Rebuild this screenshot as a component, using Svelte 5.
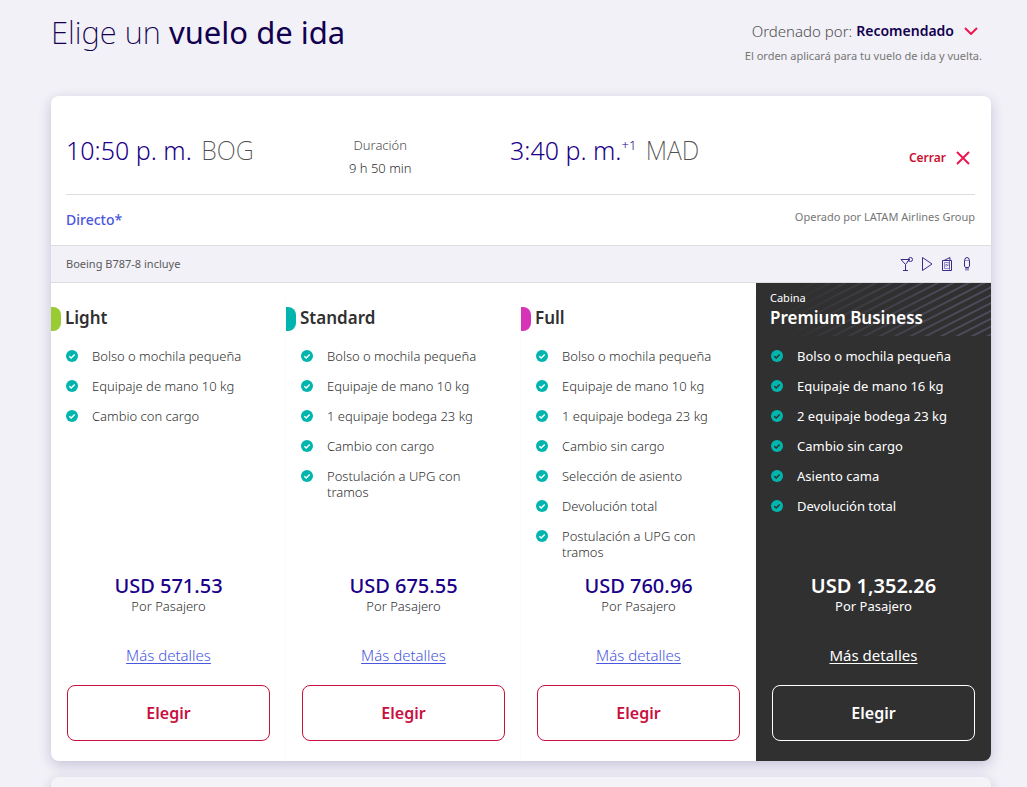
<script>
  let sortBy = $state('recomendado');

  const fares = [
    {
      name: 'Light',
      tone: 'light',
      features: ['Bolso o mochila pequeña', 'Equipaje de mano 10 kg', 'Cambio con cargo'],
      price: '571.53',
    },
    {
      name: 'Standard',
      tone: 'standard',
      features: [
        'Bolso o mochila pequeña',
        'Equipaje de mano 10 kg',
        '1 equipaje bodega 23 kg',
        'Cambio con cargo',
        'Postulación a UPG con tramos',
      ],
      price: '675.55',
    },
    {
      name: 'Full',
      tone: 'full',
      features: [
        'Bolso o mochila pequeña',
        'Equipaje de mano 10 kg',
        '1 equipaje bodega 23 kg',
        'Cambio sin cargo',
        'Selección de asiento',
        'Devolución total',
        'Postulación a UPG con tramos',
      ],
      price: '760.96',
    },
    {
      name: 'Premium Business',
      tone: 'premium',
      cabin: 'Cabina',
      features: [
        'Bolso o mochila pequeña',
        'Equipaje de mano 16 kg',
        '2 equipaje bodega 23 kg',
        'Cambio sin cargo',
        'Asiento cama',
        'Devolución total',
      ],
      price: '1,352.26',
    },
  ];
</script>

<main>
  <header class="top">
    <h1>Elige un <strong>vuelo de ida</strong></h1>
    <div class="sort">
      <div class="sort-line">
        <label for="sort">Ordenado por:</label>
        <select id="sort" bind:value={sortBy}>
          <option value="recomendado">Recomendado</option>
          <option value="precio">Precio</option>
          <option value="duracion">Duración</option>
        </select>
        <svg class="chevron" viewBox="0 0 14 8" aria-hidden="true">
          <path d="M1 1l6 6 6-6" />
        </svg>
      </div>
      <p>El orden aplicará para tu vuelo de ida y vuelta.</p>
    </div>
  </header>

  <article class="flight">
    <div class="summary">
      <div class="times">
        <p class="time">10:50 p. m. <span class="city">BOG</span></p>
        <p class="duration"><span>Duración</span>9 h 50 min</p>
        <p class="time">3:40 p. m.<sup>+1</sup> <span class="city">MAD</span></p>
        <button type="button" class="close">
          Cerrar
          <svg viewBox="0 0 14 14" aria-hidden="true"><path d="M1 1l12 12M13 1L1 13" /></svg>
        </button>
      </div>
      <div class="operator">
        <a href="#directo">Directo*</a>
        <span>Operado por LATAM Airlines Group</span>
      </div>
    </div>

    <div class="amenities">
      <span>Boeing B787-8 incluye</span>
      <div class="icons">
        <svg viewBox="0 0 14 16" aria-hidden="true">
          <path d="M1 3.500h8.500L5.500 8.500zM5.500 8.500v6M3 14.500h5M7 6l3-3" />
          <circle cx="10.500" cy="3.500" r="2" />
        </svg>
        <svg viewBox="0 0 14 16" aria-hidden="true">
          <path d="M2.500 1.500v13L12 8z" />
        </svg>
        <svg viewBox="0 0 14 16" aria-hidden="true">
          <path d="M2.500 4.500h9v10h-9zM4 4.500l6-3v3" />
          <path class="fine" d="M4.500 6.500h5v6h-5zM6 11V8l2 2V7.500M9.500 5v9" />
        </svg>
        <svg viewBox="0 0 14 16" aria-hidden="true">
          <path d="M4.500 4.500l1-2.500 1.500-.5 1.500.5 1 2.500v5.500l-1 1.500h-3l-1-1.500zM6 11.500v3M8 11.500v3" />
          <path class="fine" d="M4.500 4.500h5" />
        </svg>
      </div>
    </div>

    <div class="fares">
      {#each fares as fare}
        <section class="fare {fare.tone}">
          <div class="fare-head">
            {#if fare.cabin}
              <span class="cabin">{fare.cabin}</span>
            {/if}
            <h2>{fare.name}</h2>
          </div>
          <ul>
            {#each fare.features as feature}
              <li>
                <svg viewBox="0 0 12 12" aria-hidden="true">
                  <circle cx="6" cy="6" r="6" />
                  <path d="M3.300 6.200l1.900 1.800 3.500-3.600" />
                </svg>
                {feature}
              </li>
            {/each}
          </ul>
          <div class="buy">
            <strong class="price">USD {fare.price}</strong>
            <span class="per">Por Pasajero</span>
            <a href="#detalles">Más detalles</a>
            <button type="button">Elegir</button>
          </div>
        </section>
      {/each}
    </div>
  </article>

  <article class="flight next"></article>
</main>

<style>
  :global(html) {
    overflow: hidden;
  }

  :global(body) {
    margin: 0;
    background: #f2f1f7;
  }

  main {
    padding: 0 36px 0 51px;
    font-family: 'Noto Sans', 'Open Sans', sans-serif;
    font-size: 13px;
    font-weight: 300;
    line-height: 16px;
    color: #303030;
  }

  h1,
  h2,
  p,
  ul {
    margin: 0;
    padding: 0;
  }

  button {
    font-family: inherit;
    cursor: pointer;
  }

  .top {
    display: flex;
    justify-content: space-between;
    height: 84px;
    padding-top: 12px;
  }

  h1 {
    font-size: 31px;
    font-weight: 200;
    line-height: 40px;
    color: #10004f;
  }

  h1 strong {
    font-weight: 400;
  }

  .sort {
    padding: 8px 9px 0 0;
    color: #505050;
  }

  .sort-line {
    display: flex;
    align-items: center;
    justify-content: flex-end;
    padding-right: 4px;
    font-size: 15px;
    line-height: 22px;
  }

  select {
    field-sizing: content;
    margin: 0 10px 0 4px;
    padding: 0;
    border: 0;
    appearance: none;
    background: none;
    font: inherit;
    font-size: 14px;
    font-weight: 600;
    color: #10004f;
  }

  .chevron {
    width: 14px;
    height: 8px;
    fill: none;
    stroke: #ed1650;
    stroke-width: 2;
  }

  .sort p {
    margin-top: 6px;
    font-size: 11px;
    font-weight: 400;
    text-align: right;
    color: #767676;
  }

  .flight {
    border-radius: 8px;
    background: #fff;
    box-shadow: 0 4px 14px rgba(27, 0, 100, 0.2);
  }

  .summary {
    padding: 0 16px 0 15px;
  }

  .times {
    display: grid;
    grid-template-columns: 242fr 202fr 321fr 144fr;
    height: 98px;
    border-bottom: 1px solid #dedede;
  }

  .time {
    padding-top: 38px;
    font-size: 25px;
    line-height: 32px;
    white-space: nowrap;
    color: #1b0088;
  }

  .time .city {
    margin-left: 3px;
    font-weight: 200;
    color: #505050;
  }

  .time sup {
    font-size: 13px;
    line-height: 12px;
    vertical-align: 10px;
  }

  .duration {
    justify-self: start;
    padding: 38px 0 0 41px;
    line-height: 23px;
    text-align: center;
  }

  .duration span {
    display: block;
    color: #505050;
  }

  .close {
    display: flex;
    align-items: center;
    align-self: start;
    justify-self: end;
    gap: 10px;
    margin-top: 52px;
    padding: 0 5px 0 0;
    border: 0;
    background: none;
    font-size: 12px;
    font-weight: 600;
    line-height: 20px;
    color: #c8102e;
  }

  .close svg {
    width: 14px;
    height: 14px;
    stroke: #ed1650;
    stroke-width: 2;
  }

  .operator {
    display: flex;
    justify-content: space-between;
    height: 36px;
    padding-top: 14px;
    font-size: 11px;
    font-weight: 400;
    color: #767676;
  }

  .operator a {
    font-size: 14px;
    font-weight: 500;
    line-height: 22px;
    text-decoration: none;
    color: #4956de;
  }

  .amenities {
    display: flex;
    align-items: center;
    justify-content: space-between;
    height: 36px;
    padding: 0 17px 0 15px;
    border: solid #dedede;
    border-width: 1px 0;
    background: #f2f1f7;
    font-size: 11px;
    font-weight: 400;
    color: #5a5a5a;
  }

  .icons {
    display: flex;
    gap: 6px;
  }

  .icons svg {
    width: 14px;
    height: 16px;
    fill: none;
    stroke: #3b2a8a;
    stroke-width: 1;
  }

  .icons .fine {
    stroke-opacity: 0.5;
  }

  .fares {
    display: grid;
    grid-template-columns: repeat(4, 1fr);
    overflow: hidden;
    border-radius: 0 0 8px 8px;
  }

  .fare {
    display: flex;
    flex-direction: column;
    box-shadow: -3px 8px 4px -4px rgba(48, 48, 48, 0.06);
  }

  .fare-head {
    position: relative;
    display: flex;
    flex-direction: column;
    justify-content: flex-end;
    height: 47px;
    padding: 0 14px 6px;
  }

  .fare-head::before {
    content: '';
    position: absolute;
    left: 0;
    bottom: 5px;
    width: 10px;
    height: 24px;
    border-radius: 0 8px 8px 0;
    background: var(--tag);
  }

  .light {
    --tag: #9c3;
  }

  .standard {
    --tag: #00b5ad;
  }

  .full {
    --tag: #d633b9;
  }

  h2 {
    position: relative;
    font-size: 17px;
    font-weight: 600;
    line-height: 24px;
  }

  .cabin {
    position: relative;
    font-size: 11px;
    font-weight: 400;
    line-height: 16px;
  }

  ul {
    display: flex;
    flex-direction: column;
    gap: 14px;
    min-height: 214px;
    padding: 12px 32px 0 15px;
    list-style: none;
  }

  li {
    display: flex;
    gap: 14px;
  }

  li svg {
    flex: none;
    width: 12px;
    height: 12px;
    margin-top: 2px;
    fill: #00b5ad;
  }

  li path {
    fill: none;
    stroke: #fff;
    stroke-width: 1.500;
  }

  .buy {
    display: flex;
    flex-direction: column;
    align-items: center;
    padding: 12px 16px 20px;
  }

  .price {
    font-size: 20px;
    font-weight: 500;
    line-height: 24px;
    color: #1b0088;
  }

  .buy a {
    margin-top: 30px;
    font-size: 15px;
    line-height: 22px;
    text-underline-offset: 2px;
    color: #4956de;
  }

  .buy button {
    width: 100%;
    height: 56px;
    margin-top: 19px;
    border: 1px solid #c8103e;
    border-radius: 8px;
    background: none;
    font-size: 16px;
    font-weight: 600;
    color: #c8103e;
  }

  .premium {
    background: #303030;
    font-weight: 400;
    color: #fff;
  }

  .premium .fare-head::before {
    inset: 0;
    width: auto;
    height: auto;
    border-radius: 0;
    background: repeating-linear-gradient(153deg, transparent 0 4px, #4d4b5a 5px 6px, transparent 7px);
    mask-image: linear-gradient(90deg, transparent 10%, #000 85%);
  }

  .premium li path {
    stroke: #303030;
  }

  .premium .price {
    font-weight: 600;
  }

  .premium .price,
  .premium a,
  .premium button {
    color: #fff;
  }

  .premium button {
    border-color: #fff;
  }

  .next {
    height: 24px;
    margin-top: 16px;
    background: #f4f3f8;
  }
</style>
